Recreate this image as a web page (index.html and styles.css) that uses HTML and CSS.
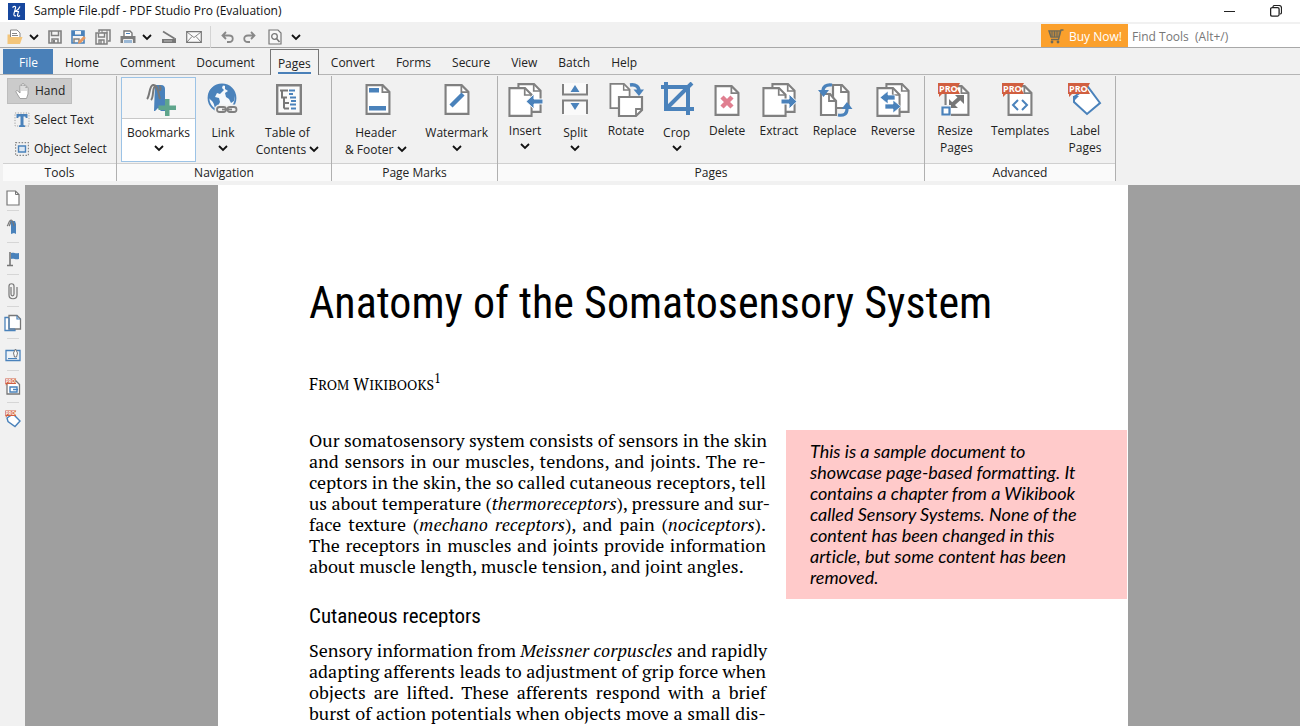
FILE: index.html
```
<!DOCTYPE html>
<html lang="en">
<head>
<meta charset="utf-8">
<title>Sample File.pdf - PDF Studio Pro (Evaluation)</title>
<link rel="stylesheet" href="styles.css">
</head>
<body>
<svg class="defs" aria-hidden="true">
  <symbol id="chev" viewBox="0 0 10 7"><path d="M1 1l4 4 4-4" fill="none" stroke="#111" stroke-width="1.800"/></symbol>
  <symbol id="sheet" viewBox="0 0 26 32"><path d="M1.200 1.200h16.600l7 7v22.600H1.200z" fill="#fff" stroke="#808080" stroke-width="2.200"/><path d="M17.500 1.500v7h7" fill="none" stroke="#808080" stroke-width="1.800"/></symbol>
  <symbol id="pro" viewBox="0 0 23 16"><path d="M0 1h22l-3 5.500 3 5.500H4l-3 3v-3H0z" fill="#d15f40"/><text x="1" y="10" class="pro-text">PRO</text></symbol>
</svg>

<header class="titlebar">
  <svg class="logo" viewBox="0 0 17 17"><path d="M0 0h17v17H0z" fill="#17479e"/><path d="M4.500 4.500C6.500 2.500 8 3.500 7.500 5L6 10.500c-.5 2 .5 3 2 2M12 3.500C11 6 9.500 7.500 7 8.500M6 8.500h4.500L9.500 12c-.3 1.500 1 1.800 2.500.5" fill="none" stroke="#fff" stroke-width="1.100"/></svg>
  <h1 class="title">Sample File.pdf - PDF Studio Pro (Evaluation)</h1>
  <button class="win" aria-label="Minimize"><svg width="12" height="12" viewBox="0 0 12 12"><path d="M0 6.500h11" stroke="#222"/></svg></button>
  <button class="win" aria-label="Restore"><svg width="12" height="12" viewBox="0 0 12 12"><path d="M3 2.500V2a1.500 1.500 0 0 1 1.500-1.500H9A2.500 2.500 0 0 1 11.500 3v4.500A1.500 1.500 0 0 1 10 9" fill="none" stroke="#222" stroke-width="1.200"/><rect x=".6" y="2.600" width="8.500" height="8.500" rx="1.500" fill="none" stroke="#222" stroke-width="1.300"/></svg></button>
</header>

<div class="quickbar">
  <div class="quick-tools">
    <button aria-label="Open"><svg width="16" height="16" viewBox="0 0 16 16"><path d="M3.500 8V1h6.500l3 3v6" fill="#fff" stroke="#888"/><path d="M5 4.500h5M5 6.500h6" stroke="#888"/><path d="M.5 15V5.500H3V8h12.500L13 15z" fill="#f3c57a"/></svg></button>
    <button class="drop" aria-label="Open recent"><svg class="chev"><use href="#chev"/></svg></button>
    <button aria-label="Save"><svg width="14" height="14" viewBox="0 0 14 14"><path d="M1 1h12v12H1z" fill="#f4f4f4" stroke="#808080" stroke-width="1.600"/><path d="M3.500 1v4.500h7V1M4 13V9h6v4" fill="none" stroke="#808080" stroke-width="1.500"/><path d="M5 10h2v3H5z" fill="#808080"/></svg></button>
    <button aria-label="Save as"><svg width="15" height="15" viewBox="0 0 15 15"><path d="M1 1h12v12H1z" fill="#f4f4f4" stroke="#4a82bb" stroke-width="1.600"/><path d="M1 1h12v5H1z" fill="#4a82bb"/><path d="M4 1h6v3.500H4z" fill="#f4f4f4"/><path d="M3 13V9h5v4" fill="none" stroke="#808080" stroke-width="1.500"/><path d="M7 14l.8-3 5-5 2 2-5 5z" fill="#e79a62"/></svg></button>
    <button aria-label="Save all"><svg width="16" height="16" viewBox="0 0 16 16"><path d="M4 3V1h11v11h-2" fill="none" stroke="#808080" stroke-width="1.500"/><path d="M7 1v3h5V1" fill="none" stroke="#808080"/><path d="M1 4h11v11H1z" fill="#f4f4f4" stroke="#808080" stroke-width="1.500"/><path d="M3.500 4v4h6V4M4 15v-4h5v4M6 11v4" fill="none" stroke="#808080" stroke-width="1.400"/></svg></button>
    <button aria-label="Print"><svg width="16" height="15" viewBox="0 0 16 15"><path d="M4 6V1h6l2 2v3" fill="#fff" stroke="#777" stroke-width="1.400"/><path d="M6 3.500h4" stroke="#4a82bb"/><path d="M.5 6h15v7H.5z" fill="#7d7d7d"/><path d="M3.500 9.500h9v4h-9z" fill="#9ab8d6" stroke="#eee"/></svg></button>
    <button class="drop" aria-label="Print options"><svg class="chev"><use href="#chev"/></svg></button>
    <button aria-label="Scan"><svg width="16" height="14" viewBox="0 0 16 14"><path d="M2 1.500l11.500 7" stroke="#777" stroke-width="1.700"/><path d="M1 9h10l4-1v5H1z" fill="#777"/><path d="M3 11h8" stroke="#ddd" stroke-width=".7"/></svg></button>
    <button aria-label="Email"><svg width="16" height="12" viewBox="0 0 16 12"><path d="M.7.700h14.600v10.600H.7z" fill="#fafafa" stroke="#777" stroke-width="1.200"/><path d="M1 1l7 5.500L15 1M1 11l5-5.500M15 11l-5-5.500" fill="none" stroke="#777" stroke-width=".9"/></svg></button>
    <span class="vbar"></span>
    <button aria-label="Undo"><svg width="13" height="12" viewBox="0 0 13 12"><path d="M5 1L1.500 4.500 5 8M1.500 4.500H8c5 0 5 6.500 0 6.500H6" fill="none" stroke="#888" stroke-width="1.800"/></svg></button>
    <button aria-label="Redo"><svg width="13" height="12" viewBox="0 0 13 12"><path d="M8 1l3.500 3.500L8 8M11.500 4.500H5C0 4.500 0 11 5 11h2" fill="none" stroke="#888" stroke-width="1.800"/></svg></button>
    <button class="wide" aria-label="Preview"><svg width="14" height="16" viewBox="0 0 14 16"><path d="M1 1h9l3 3v11H1z" fill="#f8f8f8" stroke="#777" stroke-width="1.200"/><circle cx="6.500" cy="7.500" r="2.800" fill="none" stroke="#777" stroke-width="1.300"/><path d="M8.500 9.500l3 3.500" stroke="#777" stroke-width="1.600"/></svg></button>
    <button class="drop" aria-label="More tools"><svg class="chev"><use href="#chev"/></svg></button>
  </div>
  <button class="buy"><svg width="16" height="15" viewBox="0 0 16 15"><path d="M15.500 1H13l-2.500 9.500H3M1 2h11.500l-1.500 6H3z" fill="none" stroke="#6e6a58" stroke-width="1.400"/><path d="M2 4h10M2.500 6h9M4 2v6M6.500 2v6M9 2v6" stroke="#6e6a58"/><circle cx="4" cy="13" r="1.400" fill="#6e6a58"/><circle cx="10" cy="13" r="1.400" fill="#6e6a58"/></svg>Buy Now!</button>
  <input class="find" type="text" placeholder="Find Tools  (Alt+/)" aria-label="Find Tools">
</div>

<nav class="tabs">
  <button class="tab file">File</button>
  <button class="tab">Home</button>
  <button class="tab">Comment</button>
  <button class="tab">Document</button>
  <button class="tab active"><span>Pages</span></button>
  <button class="tab">Convert</button>
  <button class="tab">Forms</button>
  <button class="tab">Secure</button>
  <button class="tab">View</button>
  <button class="tab">Batch</button>
  <button class="tab">Help</button>
</nav>

<div class="ribbon">
  <section class="group g-tools">
    <div class="tools">
      <button class="tool on"><svg width="16" height="18" viewBox="0 0 16 18"><path d="M5 16.500L1 10c-.5-1.500 1-2 2-.8L5 11V4c0-1.600 2-1.600 2 0V2.500c0-1.600 2-1.600 2 0V4c0-1.600 2-1.600 2 0v2c0-1.500 2-1.500 2 0v6l-1.500 4.500z" fill="#fff" stroke="#999" stroke-width=".9"/><path d="M7 4v5M9 3v6M11 5v4" stroke="#aaa" stroke-width=".8"/></svg>Hand</button>
      <button class="tool"><svg width="16" height="16" viewBox="0 0 16 16"><path d="M1 1h14v13H1z" fill="none" stroke="#999" stroke-width=".9" stroke-dasharray="1.200 1.500"/><path d="M2.500 6V2h11v4h-1.700l-.6-1.500H9.500V13l1.500.4V15H5v-1.600l1.500-.4V4.500H4.800L4.200 6z" fill="#4a82bb"/></svg>Select Text</button>
      <button class="tool"><svg width="16" height="14" viewBox="0 0 16 14"><path d="M1.600.600h12.800v12.800H1.600z" fill="none" stroke="#888" stroke-width="1.200" stroke-dasharray="1.500 1.500"/><path d="M4.500 4h7v6h-7z" fill="#dce8f4" stroke="#4a82bb" stroke-width="1.400"/></svg>Object Select</button>
    </div>
    <h2>Tools</h2>
  </section>

  <section class="group g-nav">
    <div class="row">
      <button class="big menu hot"><svg class="ic" viewBox="0 0 36 36"><path d="M14 3h6c3 0 4 2 4 4v22h-4l-3-3-3 3h-1z" fill="#4a82bb"/><path d="M6 17c3-3 2-13 6-14 5-1 5 8 7 14M10 18c3-3 1-11 4-14M18 4c3 1 1 4 1 5" fill="none" stroke="#787878" stroke-width="2"/><path d="M24 17h4.500v6.500H35V28h-6.500v6H24v-6h-6.500v-4.500H24z" fill="#5fa58c"/></svg><span>Bookmarks</span><svg class="chev"><use href="#chev"/></svg></button>
      <button class="big menu"><svg class="ic" viewBox="0 0 36 36"><circle cx="17" cy="16" r="13.500" fill="#f5f8fb" stroke="#4a82bb" stroke-width="1.800"/><path d="M4 10C7 4 13 2 18 3l-1 3 2 2-4 4-3-1-2 4 4 1 1 4-4 8c-2-2-1-6-4-9-2-2-4-3-4-5z" fill="#4a82bb"/><path d="M20 3c6 1 9 5 10 10l-1 6-3 2-2-4-3-2-1-4 3-2-3-2z" fill="#4a82bb"/><g fill="#f1f1f1" stroke="#f1f1f1" stroke-width="5"><rect x="12" y="25" width="9" height="5" rx="2.500"/><rect x="22.500" y="25" width="9" height="5" rx="2.500"/></g><g fill="none" stroke="#808080" stroke-width="1.800"><rect x="12" y="25" width="9" height="5" rx="2.500"/><rect x="22.500" y="25" width="9" height="5" rx="2.500"/><path d="M17 27.500h10"/></g></svg><span>Link</span><svg class="chev"><use href="#chev"/></svg></button>
      <button class="big menu toc"><svg class="ic" viewBox="0 0 36 36"><path d="M7.200 3.200h23.600v28.600H7.200z" fill="#fafafa" stroke="#808080" stroke-width="2.400"/><path d="M10 8.500h8M12 8.500v7h5M14 15.500v11M14 21h5M14 26.500h5" fill="none" stroke="#777" stroke-width="2"/><path d="M19 8.500h6M19 12h4M20 15.500h6M21 19h5M20 22.500h6M21 26.500h5" stroke="#4a82bb" stroke-width="1.800"/></svg><span>Table of</span><span>Contents <svg class="chev"><use href="#chev"/></svg></span></button>
    </div>
    <h2>Navigation</h2>
  </section>

  <section class="group g-marks">
    <div class="row">
      <button class="big menu"><svg class="ic" viewBox="0 0 36 36"><use href="#sheet" x="7" y="2" width="26" height="31"/><path d="M11 6h10v4.500H11zM11 24h17v4.500H11z" fill="#4a82bb"/></svg><span>Header</span><span>&amp; Footer <svg class="chev"><use href="#chev"/></svg></span></button>
      <button class="big menu"><svg class="ic" viewBox="0 0 36 36"><use href="#sheet" x="5" y="2" width="26" height="31"/><path d="M12 24L24 12" stroke="#4a82bb" stroke-width="4.500"/></svg><span>Watermark</span><svg class="chev"><use href="#chev"/></svg></button>
    </div>
    <h2>Page Marks</h2>
  </section>

  <section class="group g-pages">
    <div class="row">
      <button class="big"><svg class="ic" viewBox="0 0 36 36"><use href="#sheet" x="10" y="1" width="25" height="30"/><use href="#sheet" x="1" y="5" width="25" height="30"/><path d="M36 17H27v-5l-8 7.500 8 7.500v-5h9z" fill="#4a82bb" stroke="#fff"/></svg><span>Insert</span><svg class="chev"><use href="#chev"/></svg></button>
      <button class="big menu"><svg class="ic" viewBox="0 0 36 36"><path d="M6 1h24v12H6zM6 18h24v15H6z" fill="#fafafa"/><path d="M6 2v10.500h24V2M6 32V18.500h24V32" fill="none" stroke="#808080" stroke-width="2"/><path d="M18 3l4.500 7h-9zM18 28l4.500-7h-9z" fill="#4a82bb"/></svg><span>Split</span><svg class="chev"><use href="#chev"/></svg></button>
      <button class="big"><svg class="ic" viewBox="0 0 36 36"><use href="#sheet" x="1" y="1" width="22" height="26"/><path d="M11 15h23v13l-6 6H11z" fill="#fff" stroke="#808080" stroke-width="2.200"/><path d="M34 27h-6v7" fill="none" stroke="#808080" stroke-width="1.800"/><path d="M22 3c6-1 9 2 9 6" fill="none" stroke="#4a82bb" stroke-width="3.400"/><path d="M25.500 7.500H36L31 14z" fill="#4a82bb"/></svg><span>Rotate</span></button>
      <button class="big menu"><svg class="ic" viewBox="0 0 36 36"><path d="M2 5h27v28M7 0v27h28M8 26L33 1" fill="none" stroke="#4a82bb" stroke-width="4"/></svg><span>Crop</span><svg class="chev"><use href="#chev"/></svg></button>
      <button class="big"><svg class="ic" viewBox="0 0 36 36"><use href="#sheet" x="5" y="3" width="26" height="31"/><path d="M13 15l10 10M23 15L13 25" stroke="#e07f90" stroke-width="4.500"/></svg><span>Delete</span></button>
      <button class="big"><svg class="ic" viewBox="0 0 36 36"><use href="#sheet" x="10" y="1" width="25" height="30"/><use href="#sheet" x="1" y="5" width="25" height="30"/><path d="M20 17h8v-5l8 7.500-8 7.500v-5h-8z" fill="#4a82bb" stroke="#fff"/></svg><span>Extract</span></button>
      <button class="big"><svg class="ic" viewBox="0 0 36 36"><path d="M16 3h9l6.500 7v16H16z" fill="#fff" stroke="#808080" stroke-width="2.200"/><path d="M24 3v7h7" fill="none" stroke="#808080" stroke-width="1.800"/><path d="M4 12h9l6 7v14H4z" fill="#fff" stroke="#808080" stroke-width="2.200"/><path d="M12 12v7h7" fill="none" stroke="#808080" stroke-width="1.800"/><path d="M15 3c-6-1-9 2-9 6M21 33c6 1 9-1 9-6" fill="none" stroke="#f1f1f1" stroke-width="6"/><path d="M15 3c-6-1-9 2-9 6M21 33c6 1 9-1 9-6" fill="none" stroke="#4a82bb" stroke-width="3.200"/><path d="M1 8h11l-5.500 7zM24.500 27h11L30 20z" fill="#4a82bb"/></svg><span>Replace</span></button>
      <button class="big"><svg class="ic" viewBox="0 0 36 36"><use href="#sheet" x="10" y="1" width="25" height="30"/><use href="#sheet" x="1" y="5" width="25" height="30"/><path d="M20 13h-7V9l-8 6.500 8 6.500v-4h7zM10 22h8v-4l8 6.500-8 6.500v-4h-8z" fill="#4a82bb" stroke="#fff" stroke-width=".7"/></svg><span>Reverse</span></button>
    </div>
    <h2>Pages</h2>
  </section>

  <section class="group g-adv">
    <div class="row">
      <button class="big"><svg class="ic" viewBox="0 0 36 36"><use href="#sheet" x="7" y="3" width="26" height="31"/><path d="M15 23l9-8" stroke="#777" stroke-width="4"/><path d="M18 13h9v9zM21 26h-9v-9z" fill="#777"/><path d="M4 23h10v11H4z" fill="#f1f1f1"/><path d="M5.500 25.500h7v7h-7z" fill="#fff" stroke="#4a82bb" stroke-width="2.200"/><use href="#pro" x="1" y="0" width="23" height="16"/></svg><span>Resize</span><span>&nbsp;Pages</span></button>
      <button class="big"><svg class="ic" viewBox="0 0 36 36"><use href="#sheet" x="5" y="3" width="26" height="31"/><path d="M16 18l-5 5 5 5M20 18l5 5-5 5" fill="none" stroke="#4a82bb" stroke-width="2"/><use href="#pro" x="0" y="0" width="23" height="16"/></svg><span>Templates</span></button>
      <button class="big"><svg class="ic" viewBox="0 0 36 36"><path d="M7 15l14-10 12 16-13 11L7 20z" fill="#fff" stroke="#4a82bb" stroke-width="2"/><path d="M6 14h6l-6 6z" fill="#4a82bb"/><use href="#pro" x="1" y="0" width="23" height="16"/></svg><span>Label</span><span>Pages</span></button>
    </div>
    <h2>Advanced</h2>
  </section>
</div>

<div class="workspace">
  <aside class="side">
    <button aria-label="Pages panel"><svg width="14" height="16" viewBox="0 0 14 16"><path d="M1 1h8.500L13 4.500V15H1z" fill="#fff" stroke="#777" stroke-width="1.200"/><path d="M9.500 1v3.500H13" fill="none" stroke="#777"/></svg></button>
    <button aria-label="Bookmarks panel"><svg width="14" height="16" viewBox="0 0 14 16"><path d="M4 2h5l1 3v10l-2-1-3 1V6z" fill="#4a82bb"/><path d="M1 7c2-1 1-5 4-6 2 0 2 3 3 6M3 7c1-1 1-3 2-4" fill="none" stroke="#777" stroke-width="1.200"/></svg></button>
    <button aria-label="Destinations panel"><svg width="14" height="16" viewBox="0 0 14 16"><path d="M5 2c3-1 4 1 8 0v6c-4 1-5-1-8 0z" fill="#4a82bb"/><path d="M4 1v13M1 14.500h6" stroke="#777" stroke-width="1.600"/></svg></button>
    <button aria-label="Attachments panel"><svg width="10" height="18" viewBox="0 0 10 18"><path d="M3 5v7c0 2.500 3 2.500 3 0V4c0-3-5-3-5 0v9c0 5 8 5 8 0V5" fill="none" stroke="#777" stroke-width="1.200"/></svg></button>
    <button aria-label="Layers panel"><svg width="18" height="18" viewBox="0 0 18 18"><path d="M1 3.500h10v13H1z" fill="#fff" stroke="#4a82bb" stroke-width="1.300"/><path d="M5 1.500h8l3.500 3.500v10H5z" fill="#fff" stroke="#777" stroke-width="1.300"/><path d="M13 1.500V5h3.500M5 4v11h6" fill="none" stroke="#4a82bb" stroke-width="1.200"/></svg></button>
    <button aria-label="Signatures panel"><svg width="16" height="14" viewBox="0 0 16 14"><path d="M1 2.500h14v10H1z" fill="#eef3f8" stroke="#4a82bb" stroke-width="1.300"/><path d="M8.500 5l2-4 2 4-1 4h-2z" fill="#fff" stroke="#777"/><path d="M3 10.500h9" stroke="#4a82bb"/></svg></button>
    <button aria-label="Templates panel"><svg width="16" height="18" viewBox="0 0 16 18"><path d="M2 3h9l3.500 3.500V16H2z" fill="#fff" stroke="#777" stroke-width="1.300"/><path d="M5 9h7v5H5zM8 11.500h5" fill="none" stroke="#4a82bb" stroke-width="1.400"/><use href="#pro" x="0" y="0" width="12" height="8"/></svg></button>
    <button aria-label="Labels panel"><svg width="16" height="18" viewBox="0 0 16 18"><path d="M2 8l6-4 7 7-5 5.500-7-5z" fill="#fff" stroke="#4a82bb" stroke-width="1.400"/><use href="#pro" x="0" y="0" width="12" height="8"/></svg></button>
  </aside>
  <main class="canvas">
    <article class="page">
      <h2 class="doc-title">Anatomy of the Somatosensory System</h2>
      <p class="byline">F<small>ROM</small> W<small>IKIBOOKS</small><sup>1</sup></p>
      <div class="cols">
        <div class="text">
          <p><span>Our somatosensory system consists of sensors in the skin</span>
          <span>and sensors in our muscles, tendons, and joints. The re-</span>
          <span>ceptors in the skin, the so called cutaneous receptors, tell</span>
          <span>us about temperature (<em>thermoreceptors</em>), pressure and sur-</span>
          <span>face texture (<em>mechano receptors</em>), and pain (<em>nociceptors</em>).</span>
          <span>The receptors in muscles and joints provide information</span>
          <span class="end">about muscle length, muscle tension, and joint angles.</span></p>
          <h3>Cutaneous receptors</h3>
          <p><span>Sensory information from <em>Meissner corpuscles</em> and rapidly</span>
          <span>adapting afferents leads to adjustment of grip force when</span>
          <span>objects are lifted. These afferents respond with a brief</span>
          <span>burst of action potentials when objects move a small dis-</span></p>
        </div>
        <aside class="note">This is a sample document to<br>showcase page-based formatting. It<br>contains a chapter from a Wikibook<br>called Sensory Systems. None of the<br>content has been changed in this<br>article, but some content has been<br>removed.</aside>
      </div>
    </article>
  </main>
</div>
</body>
</html>
```

FILE: styles.css
```
* { box-sizing: border-box; }
body {
  margin: 0;
  height: 100vh;
  display: flex;
  flex-direction: column;
  overflow: hidden;
  background: #f1f1f1;
  color: #222;
  font: 12px/16px "Open Sans", "Noto Sans", sans-serif;
}
h1, h2, h3, p { margin: 0; font-weight: normal; }
button {
  border: 0;
  padding: 0;
  background: none;
  font: inherit;
  color: inherit;
}
svg { flex: none; display: block; }
.defs { position: absolute; width: 0; height: 0; }
.chev { width: 10px; height: 7px; }
.pro-text { font: bold 9px "Open Sans", sans-serif; fill: #fff; }

.titlebar {
  display: flex;
  align-items: center;
  flex: none;
  height: 22px;
  padding: 0 18px 0 8px;
  background: #fff;
}
.logo { width: 17px; height: 17px; margin-right: 9px; }
.title { flex: 1; font-size: 12px; color: #111; }
.win { width: 12px; margin-left: 34px; }

.quickbar {
  display: flex;
  flex: none;
  height: 26px;
  padding-top: 2px;
  border-bottom: 1px solid #a8a8a8;
}
.quick-tools { flex: 1; display: flex; align-items: center; gap: 9px; padding: 3px 0 0 7px; }
.drop { margin: 0 0 0 -3px; }
.wide { padding: 0 3px; }
.vbar { width: 1px; height: 22px; background: #d4d4d4; margin: 0 1px 0 -1px; }
.buy {
  display: flex;
  align-items: center;
  gap: 5px;
  width: 87px;
  padding: 2px 0 0 7px;
  background: #fba02c;
  color: #fff;
}
.find {
  width: 172px;
  border: 0;
  padding: 2px 4px 0;
  background: #fff;
  font: inherit;
  white-space: pre;
}
.find::placeholder { color: #777; }

.tabs {
  display: flex;
  flex: none;
  height: 27px;
  padding: 1px 0 0 3px;
  border-bottom: 1px solid #b5b5b5;
}
.tab { padding: 2px 10px 0 11px; height: 26px; color: #222; }
.file { width: 50px; margin-right: 1px; background: #4a80b8; color: #fff; height: 25px; }
.active {
  width: 49px;
  margin: 0 1px 0 5px;
  padding: 0;
  background: #f3f3f3;
  border: 1px solid #777;
  border-bottom: 0;
}
.active span {
  display: block;
  margin: 4px 7px 0;
  border-bottom: 2px solid #4a80b8;
}

.ribbon { display: flex; flex: none; padding: 1px 0 4px 3px; }
.group {
  display: flex;
  flex-direction: column;
  height: 105px;
  border-right: 1px solid #b0b0b0;
}
.group h2 {
  flex: none;
  height: 18px;
  border-top: 1px solid #d0d0d0;
  background: #fafafa;
  font-size: 12px;
  line-height: 18px;
  text-align: center;
}
.g-tools { width: 114px; }
.g-nav { width: 215px; }
.g-marks { width: 166px; }
.g-pages { width: 427px; }
.g-adv { width: 191px; }
.tools {
  flex: 1;
  display: flex;
  flex-direction: column;
  align-items: flex-start;
  justify-content: space-between;
  padding: 2px 4px 1px;
}
.tool { display: flex; align-items: center; gap: 4px; height: 26px; padding: 0 6px 0 7px; white-space: nowrap; }
.on { background: #cbcbcb; border: 1px solid #bdbdbd; }
.row { flex: 1; display: flex; justify-content: space-between; padding: 0 9px; }
.g-nav .row { justify-content: flex-start; gap: 9px; padding: 0 4px; }
.g-marks .row { padding-left: 13px; }
.g-adv .row { padding: 0 12px; }
.big {
  display: flex;
  flex-direction: column;
  align-items: center;
  min-width: 36px;
  margin: 1px 0;
  padding-top: 5px;
  line-height: 17px;
  white-space: nowrap;
}
.ic { width: 36px; height: 36px; margin-bottom: 4px; }
.menu .ic { margin-bottom: 6px; }
.big > .chev { margin-top: 4px; }
.big span .chev { display: inline-block; vertical-align: 1px; }
.toc { width: 75px; }
.hot {
  width: 75px;
  border: 1px solid #9cc3e6;
  padding-top: 4px;
  background: linear-gradient(#f5f5f5 40px, #c8c8c8 40px, #c8c8c8 41px, #fff 41px);
}

.workspace { flex: 1; display: flex; min-height: 0; }
.side { width: 25px; display: flex; flex-direction: column; align-items: center; }
.side button {
  display: flex;
  align-items: center;
  justify-content: center;
  flex: none;
  width: 12px;
  height: 25px;
}
.side button + button { border-top: 1px solid #d6d6d6; height: 32px; }
.canvas {
  flex: 1;
  display: flex;
  justify-content: center;
  padding-left: 21px;
  background: #9f9f9f;
  overflow: hidden;
}
.page {
  width: 910px;
  padding: 90px 0 0 91px;
  background: #fff;
  color: #000;
}
.doc-title { font: 44px/56px "Roboto Condensed", "Liberation Sans Narrow", sans-serif; white-space: nowrap; }
.byline { margin-top: 41px; font: 17px/24px "PT Serif", "Liberation Serif", serif; }
.byline small { font-size: 14px; }
.byline sup { font-size: 13px; line-height: 0; }
.cols { display: flex; gap: 20px; align-items: flex-start; margin-top: 33px; }
.text { width: 457px; font: 18px/21px "PT Serif", "Liberation Serif", serif; white-space: nowrap; }
.text p span { display: block; text-align-last: justify; }
.text p .end { text-align-last: left; }
.text h3 { margin: 27px 0 12px; font: 21px/24px "Roboto Condensed", "Liberation Sans Narrow", sans-serif; }
.note {
  flex: 1;
  margin-right: 1px;
  padding: 11px 24px;
  background: #ffcaca;
  font: italic 18px/21px Lato, sans-serif;
  font-variant-ligatures: none;
  white-space: nowrap;
}
```
